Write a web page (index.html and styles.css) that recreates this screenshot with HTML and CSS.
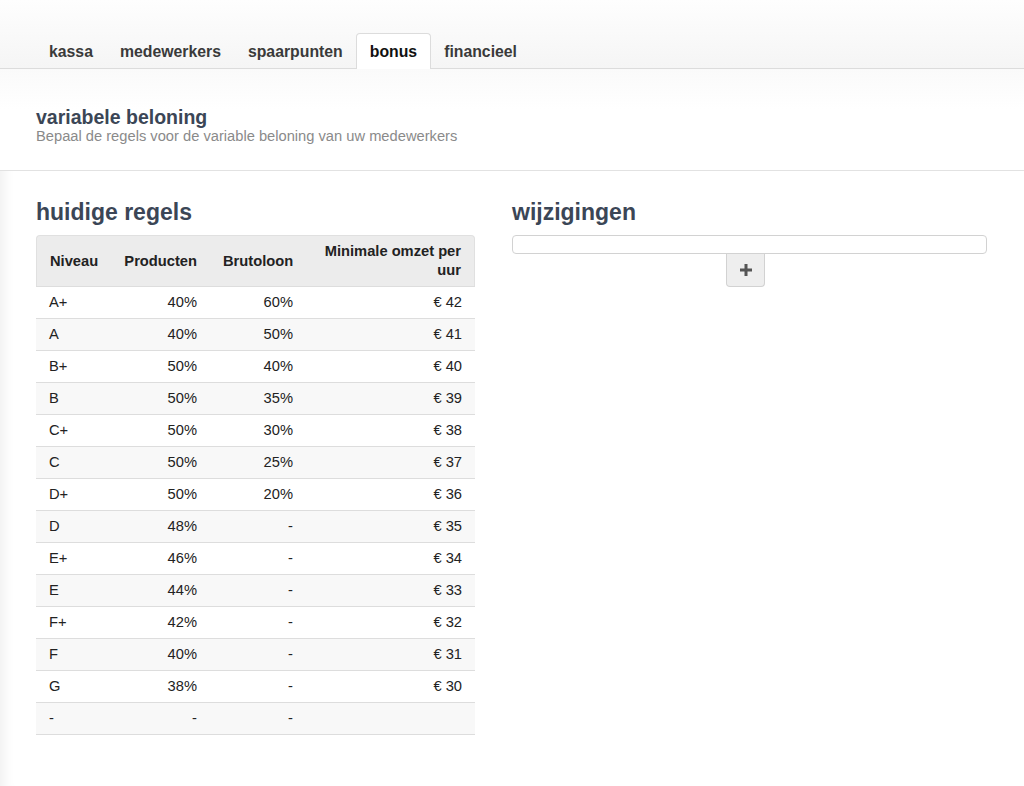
FILE: index.html
```html
<!DOCTYPE html>
<html lang="nl">
<head>
    <meta charset="UTF-8">
    <title>bonus</title>
    <link rel="stylesheet" href="styles.css">
</head>
<body>
    <nav class="tabs">
        <a class="tab">kassa</a>
        <a class="tab">medewerkers</a>
        <a class="tab">spaarpunten</a>
        <a class="tab active">bonus</a>
        <a class="tab">financieel</a>
    </nav>

    <header class="page-header">
        <h1>variabele beloning</h1>
        <p>Bepaal de regels voor de variable beloning van uw medewerkers</p>
    </header>

    <main class="content">
        <section class="current">
            <h2>huidige regels</h2>
            <table class="rules">
                <colgroup>
                    <col class="c-level">
                    <col class="c-products">
                    <col class="c-wage">
                    <col class="c-min">
                </colgroup>
                <thead>
                    <tr>
                        <th class="left">Niveau</th>
                        <th>Producten</th>
                        <th>Brutoloon</th>
                        <th>Minimale omzet per uur</th>
                    </tr>
                </thead>
                <tbody id="rules-body"></tbody>
            </table>
        </section>

        <section class="changes">
            <h2>wijzigingen</h2>
            <div class="change-box"></div>
            <button class="add-button" aria-label="toevoegen">
                <svg width="14" height="14" viewBox="0 0 14 14">
                    <rect x="5.5" y="1" width="3" height="12" fill="#555"/>
                    <rect x="1" y="5.5" width="12" height="3" fill="#555"/>
                </svg>
            </button>
        </section>
    </main>

    <script>
        const rules = [
            ['A+', '40%', '60%', '€ 42'],
            ['A', '40%', '50%', '€ 41'],
            ['B+', '50%', '40%', '€ 40'],
            ['B', '50%', '35%', '€ 39'],
            ['C+', '50%', '30%', '€ 38'],
            ['C', '50%', '25%', '€ 37'],
            ['D+', '50%', '20%', '€ 36'],
            ['D', '48%', '-', '€ 35'],
            ['E+', '46%', '-', '€ 34'],
            ['E', '44%', '-', '€ 33'],
            ['F+', '42%', '-', '€ 32'],
            ['F', '40%', '-', '€ 31'],
            ['G', '38%', '-', '€ 30'],
            ['-', '-', '-', '']
        ];

        const body = document.getElementById('rules-body');
        rules.forEach(row => {
            const tr = document.createElement('tr');
            row.forEach((value, i) => {
                const td = document.createElement('td');
                if (i === 0) td.className = 'left';
                td.textContent = value;
                tr.appendChild(td);
            });
            body.appendChild(tr);
        });
    </script>
</body>
</html>
```

FILE: styles.css
```css
body {
    margin: 0;
    font-family: 'Liberation Sans', Arial, Helvetica, sans-serif;
    font-size: 14.7px;
    color: #222;
    background: #fff;
    min-height: 786px;
    box-shadow: inset 14px 0 14px -12px rgba(0, 0, 0, 0.08);
}
.tabs {
    display: flex;
    padding: 33px 35px 0;
    height: 35px;
    background: linear-gradient(#fefefe, #f5f5f5);
    border-bottom: 1px solid #dcdcdc;
}
.tab {
    padding: 8px 13px;
    margin-bottom: -1px;
    font-size: 15.8px;
    font-weight: bold;
    line-height: 19px;
    color: #3a3a3a;
    border: 1px solid transparent;
    border-bottom: none;
    border-radius: 4px 4px 0 0;
    cursor: pointer;
}
.tab + .tab {
    margin-left: -1px;
}
.tab.active {
    color: #111;
    background: #fff;
    border-color: #dcdcdc;
}
.page-header {
    padding: 37px 36px 25px;
    background: linear-gradient(#fafafa, #fff 40px);
    border-bottom: 1px solid #e2e2e2;
}
.page-header h1 {
    margin: 0;
    font-size: 19.5px;
    line-height: 22px;
    color: #3b4656;
}
.page-header p {
    margin: 0;
    font-size: 14.7px;
    line-height: 17px;
    color: #8a8a8a;
}
.content {
    display: grid;
    grid-template-columns: 439px 475px;
    column-gap: 37px;
    padding: 29px 36px 40px;
}
.content h2 {
    margin: 0 0 10px;
    font-size: 23px;
    line-height: 25px;
    color: #3b4656;
}
.rules {
    width: 439px;
    table-layout: fixed;
    border-collapse: separate;
    border-spacing: 0;
}
.c-level { width: 75px; }
.c-products { width: 99px; }
.c-wage { width: 96px; }
.c-min { width: 169px; }
.rules th {
    padding: 6px 13px;
    line-height: 19px;
    font-weight: bold;
    text-align: right;
    vertical-align: middle;
    background: #ececec;
    border-top: 1px solid #e0e0e0;
}
.rules th:first-child {
    border-left: 1px solid #e0e0e0;
    border-top-left-radius: 4px;
}
.rules th:last-child {
    border-right: 1px solid #e0e0e0;
    border-top-right-radius: 4px;
}
.rules td {
    padding: 6px 13px 6px;
    line-height: 19px;
    text-align: right;
    border-top: 1px solid #ddd;
}
.rules tbody tr:nth-child(even) td {
    background: #f8f8f8;
}
.rules tbody tr:last-child td {
    border-bottom: 1px solid #ddd;
}
.rules .left {
    text-align: left;
}
.changes {
    display: flex;
    flex-direction: column;
}
.change-box {
    height: 17px;
    border: 1px solid #d2d2d2;
    border-radius: 4px;
    background: #fff;
}
.add-button {
    align-self: center;
    margin-right: 8px;
    width: 39px;
    height: 33px;
    padding: 0;
    display: flex;
    align-items: center;
    justify-content: center;
    background: #eee;
    border: 1px solid #d2d2d2;
    border-top: none;
    border-radius: 0 0 4px 4px;
    cursor: pointer;
}
```
